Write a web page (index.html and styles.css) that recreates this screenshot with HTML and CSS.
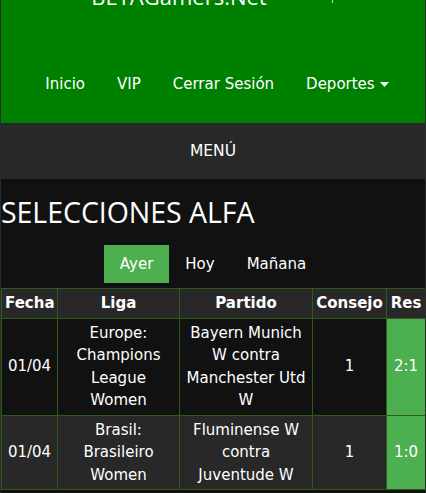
FILE: index.html
```html
<!DOCTYPE html>
<html lang="es">
<head>
<meta charset="utf-8">
<title>BETAGamers.Net</title>
<link rel="stylesheet" href="styles.css">
</head>
<body>
<div class="page">
  <header class="header">
    <div class="brand-row">
      <span class="brand">BETAGamers.Net</span>
      <span class="brand-mark"></span>
    </div>
    <nav class="nav">
      <a class="nav-link" href="#">Inicio</a>
      <a class="nav-link" href="#">VIP</a>
      <a class="nav-link" href="#">Cerrar Sesión</a>
      <a class="nav-link" href="#">Deportes <svg class="caret" width="9" height="5" viewBox="0 0 9 5"><path d="M0 0H9L4.5 5Z" fill="#fff"/></svg></a>
    </nav>
  </header>
  <div class="menu-bar">MENÚ</div>
  <main class="content">
    <h1 class="title">SELECCIONES ALFA</h1>
    <div class="tabs">
      <a class="tab tab-active" href="#">Ayer</a>
      <a class="tab" href="#">Hoy</a>
      <a class="tab" href="#">Mañana</a>
    </div>
    <table class="picks">
      <colgroup>
        <col class="c-fecha"><col class="c-liga"><col class="c-partido"><col class="c-consejo"><col class="c-res">
      </colgroup>
      <thead>
        <tr><th>Fecha</th><th>Liga</th><th>Partido</th><th>Consejo</th><th>Res</th></tr>
      </thead>
      <tbody>
        <tr class="row-dark">
          <td>01/04</td>
          <td>Europe: Champions League Women</td>
          <td>Bayern Munich W contra Manchester Utd W</td>
          <td>1</td>
          <td class="res">2:1</td>
        </tr>
        <tr class="row-light">
          <td>01/04</td>
          <td>Brasil: Brasileiro Women</td>
          <td>Fluminense W contra Juventude W</td>
          <td>1</td>
          <td class="res">1:0</td>
        </tr>
      </tbody>
    </table>
  </main>
</div>
</body>
</html>
```

FILE: styles.css
```css
* { box-sizing: border-box; }
html, body { margin: 0; padding: 0; }
body {
  background: #111111;
  color: #ffffff;
  font-family: "DejaVu Sans", Verdana, sans-serif;
  font-size: 15px;
  line-height: 1.5;
}
.page {
  border-left: 1px solid #2b2b2b;
  border-right: 1px solid #2b2b2b;
  min-height: 493px;
  overflow: hidden;
}
.header {
  background: #008000;
  display: flex;
  flex-direction: column;
}
.brand-row {
  display: flex;
  justify-content: center;
  align-items: flex-start;
  height: 30px;
  margin-top: -19px;
  padding-right: 2px;
}
.brand {
  font-family: "Open Sans", sans-serif;
  font-size: 22px;
  line-height: 30px;
  color: #ffffff;
}
.brand-mark {
  width: 1px;
  height: 22px;
  margin-left: 65px;
  background: #c9d9c9;
}
.nav {
  display: flex;
  justify-content: center;
  margin-top: 48px;
  padding-bottom: 13px;
  padding-left: 8px;
}
.nav-link {
  color: #ffffff;
  text-decoration: none;
  padding: 14px 16px;
  line-height: 22.5px;
  display: flex;
  align-items: center;
  white-space: nowrap;
}
.caret { margin-left: 5px; margin-top: 1px; }
.menu-bar {
  background: #282828;
  text-align: center;
  font-size: 15.5px;
  line-height: 22px;
  padding: 17px 0;
}
.content { display: flex; flex-direction: column; }
.title {
  font-family: "Open Sans", sans-serif;
  font-weight: 400;
  font-size: 28.5px;
  line-height: 34px;
  margin: 16px 0 16px 0;
  letter-spacing: -0.05px;
}
.tabs {
  display: flex;
  justify-content: center;
  margin-bottom: 5px;
}
.tab {
  color: #ffffff;
  text-decoration: none;
  padding: 8px 16px;
  line-height: 22.5px;
}
.tab-active { background: #4caf50; }
.picks {
  width: 424px;
  table-layout: fixed;
  border-collapse: collapse;
  text-align: center;
}
.c-fecha { width: 56px; }
.c-liga { width: 122px; }
.c-partido { width: 133px; }
.c-consejo { width: 74px; }
.c-res { width: 39px; }
.picks th, .picks td {
  border: 1px solid #2e5a1e;
  padding: 3px;
  vertical-align: middle;
  overflow: visible;
}
.picks th {
  background: #282828;
  font-weight: 700;
  white-space: nowrap;
}
.row-dark td { background: #111111; }
.row-light td { background: #282828; }
.picks td.res { background: #4caf50; }
```
